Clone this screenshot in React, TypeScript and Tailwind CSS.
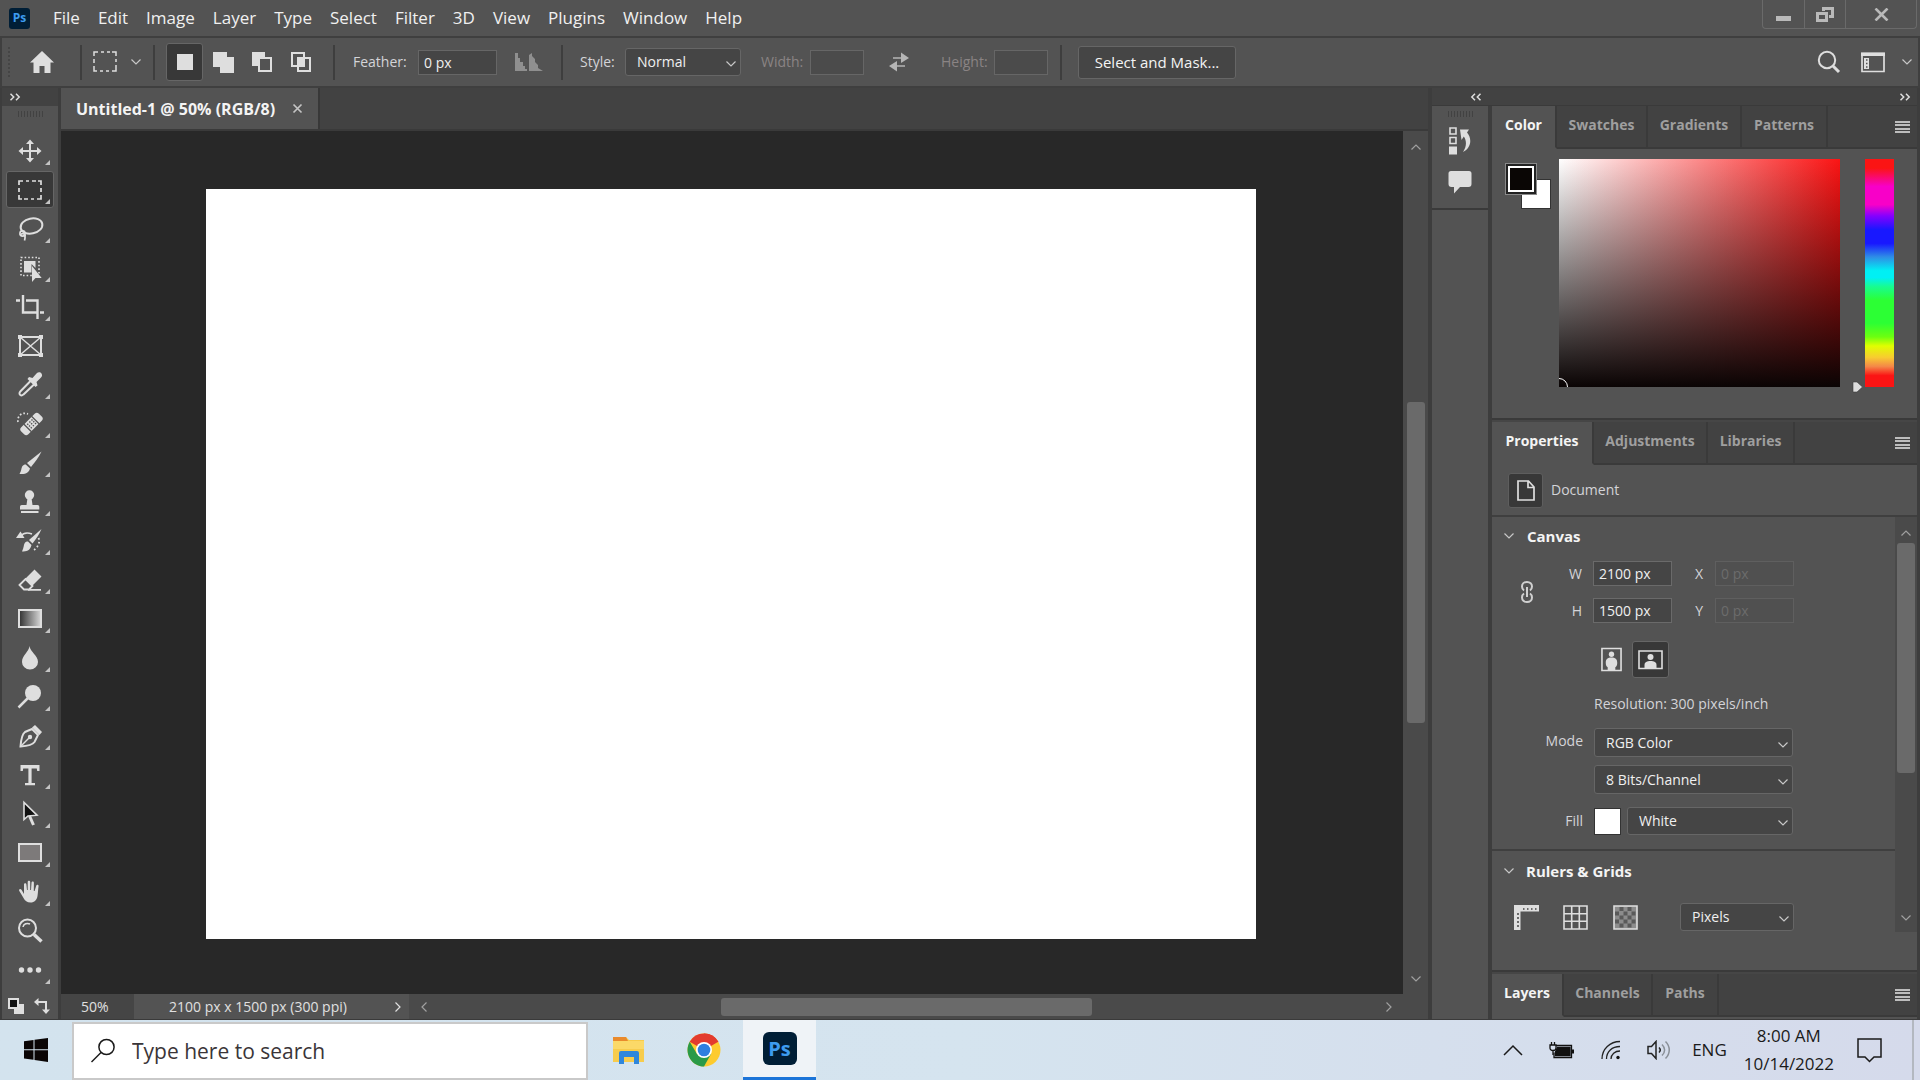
import React, { useState } from "react";

type Kids = { children: React.ReactNode };

/* ---------- shared pieces ---------- */

function Icon({ size = 28, children }: Kids & { size?: number }) {
  return (
    <svg
      width={size}
      height={size}
      viewBox={`0 0 ${size} ${size}`}
      fill="none"
      stroke="#dedede"
      strokeWidth={2}
      className="block shrink-0"
      aria-hidden="true"
    >
      {children}
    </svg>
  );
}

function Chevron({ className = "" }: { className?: string }) {
  return (
    <svg width="12" height="8" viewBox="0 0 12 8" fill="none" stroke="currentColor" strokeWidth="1.2" className={"shrink-0 " + className} aria-hidden="true">
      <path d="M1.500 1.500 6 6l4.500-4.500" />
    </svg>
  );
}

function DoubleChevron({ left = false }: { left?: boolean }) {
  return (
    <svg width="12" height="8" viewBox="0 0 12 8" fill="none" stroke="#dedede" strokeWidth="1.5" className={left ? "rotate-180" : ""} aria-hidden="true">
      <path d="M1.500 .8 4.700 4 1.500 7.200M7 .8 10.200 4 7 7.200" />
    </svg>
  );
}

function Grip() {
  return (
    <div className="flex gap-[2px]" aria-hidden="true">
      {Array.from({ length: 9 }, (_, i) => (
        <span key={i} className="h-[6px] w-px bg-[#424242]" />
      ))}
    </div>
  );
}

function Divider({ className = "" }: { className?: string }) {
  return <span className={"h-[35px] w-[2px] shrink-0 bg-[#3e3e3e] " + className} />;
}

function Dropdown({ label, options, id, className = "" }: { label: string; options: string[]; id: string; className?: string }) {
  return (
    <div className={"relative " + className}>
      <select
        id={id}
        aria-label={label}
        className="block h-full w-full appearance-none rounded-[3px] border border-[#666666] bg-[#454545] pr-6 pl-[11px] text-[14px] leading-5 text-[#f0f0f0] outline-none"
      >
        {options.map((o) => (
          <option key={o}>{o}</option>
        ))}
      </select>
      <Chevron className="pointer-events-none absolute top-1/2 right-[4px] -mt-[2px] text-[#c8c8c8]" />
    </div>
  );
}

/* ---------- tool icons ---------- */

const F = "#dedede";

const tools: { name: string; art: React.ReactNode; menu?: boolean }[] = [
  {
    name: "Move",
    art: (
      <>
        <path d="M14 5v18M5 14h18" />
        <path d="M14 2.500 18 7h-8zM14 25.500 18 21h-8zM2.500 14 7 10v8zM25.500 14 21 10v8z" fill={F} stroke="none" />
      </>
    ),
  },
  {
    name: "Rectangular Marquee",
    art: <path d="M3 9V5h4M10 5h3M16 5h4M22 5h3v4M25 12v4M25 19v4h-4M18 23h-3M12 23H8M6 23H3v-4M3 16v-4" strokeWidth="1.700" />,
  },
  {
    name: "Lasso",
    art: (
      <>
        <ellipse cx="15.500" cy="11" rx="11" ry="7.500" transform="rotate(-12 15.500 11)" />
        <circle cx="6.500" cy="18.500" r="2.600" strokeWidth="1.600" />
        <path d="M4 20c3-3 6 0 5 1.500M8 20c2 1.500 1 3 .5 5.500" strokeWidth="1.700" />
      </>
    ),
  },
  {
    name: "Object Selection",
    art: (
      <>
        <rect x="5" y="3.500" width="18" height="18" strokeWidth="1.600" strokeDasharray="1.600 2" />
        <path d="M8 7h11.500v7L15.500 10v8.500H8z" fill={F} stroke="none" />
        <path d="M16 12v16l3.500-4h6.200z" fill={F} stroke="none" />
      </>
    ),
  },
  {
    name: "Crop",
    art: <path d="M0 7.500h4M7 2v17.500h14M10 7.500h11.500V26M24 19.500h4" strokeWidth="2.400" />,
  },
  {
    name: "Frame",
    menu: false,
    art: (
      <>
        <rect x="4" y="5" width="21" height="18" />
        <path d="m4 5 21 18M25 5 4 23" strokeWidth="1.500" />
        <path d="M2 3h4v4H2zM23 3h4v4h-4zM2 21h4v4H2zM23 21h4v4h-4z" fill={F} stroke="none" />
      </>
    ),
  },
  {
    name: "Eyedropper",
    art: (
      <>
        <path d="M14.500 10 4.500 20.200c-1.500 1.500-1.200 3.500 0 4 1 .6 2 .2 3-.8L18 13.500" />
        <path d="m13 6 3.500 1 4-4.500c1.500-1.700 4-1.700 5 0s.7 3-.7 4.300L20.500 11l1 3.500-2 1.500L11.500 8z" fill={F} stroke="none" />
      </>
    ),
  },
  {
    name: "Spot Healing Brush",
    art: (
      <>
        <g transform="rotate(-45 15.500 14)">
          <rect x="3" y="9" width="25" height="10" rx="3" fill={F} stroke="none" />
          <path d="M10 8.500v11M21 8.500v11" stroke="#535353" strokeWidth="1.200" />
          <path d="M12 11.500h8M12 14h8M12 16.500h8" stroke="#535353" strokeWidth="1.400" strokeDasharray="1.400 1.600" />
        </g>
        <path d="M2 12C1 6 6 1.500 12 4" strokeWidth="1.700" strokeDasharray="1.700 2" />
      </>
    ),
  },
  {
    name: "Brush",
    art: (
      <>
        <path d="M25.500 2.500 11 14l4 4C19 13 23 8 25.500 2.500z" fill={F} stroke="none" />
        <path d="M9.800 15.500c-3.300 0-4 2.500-4.500 5-.3 1.500-1 3-1.800 4.500 4.500 0 9 .2 10.500-5.500z" fill={F} stroke="none" />
      </>
    ),
  },
  {
    name: "Clone Stamp",
    art: (
      <>
        <circle cx="13.500" cy="7" r="4.700" fill={F} stroke="none" />
        <path d="M11.500 10h4l1 7h5c1.200 0 1.800.8 1.800 2v2.500H4V19c0-1.200.6-2 1.800-2h4.700zM5 23h17.500v2H5z" fill={F} stroke="none" />
      </>
    ),
  },
  {
    name: "History Brush",
    art: (
      <>
        <path d="M25.500 2 13 13l3.500 3.500C20 12 23.500 7 25.500 2z" fill={F} stroke="none" />
        <path d="M12 14.500c-3 0-3.700 2-4.200 4.500-.3 1.700-1 3.500-1.800 5.500 4.500 0 8-.5 9.500-6.500z" fill={F} stroke="none" />
        <path d="M0 11 4.500 4.500 8.500 11z" fill={F} stroke="none" />
        <path d="M5 9C8 5 12 5.500 16 7" strokeWidth="1.500" />
        <path d="M22.500 11c2 4-.5 9-4.500 12" strokeWidth="1.800" strokeDasharray="1.700 2.300" />
      </>
    ),
  },
  {
    name: "Eraser",
    art: (
      <>
        <path d="m3.500 19 6-6 7 7-3.500 3.500H8z" strokeWidth="1.800" />
        <path d="M9 13 18.500 3.500l7 7-9.500 9.500zM12 23h13v1.800H12z" fill={F} stroke="none" />
      </>
    ),
  },
  {
    name: "Gradient",
    art: (
      <>
        <defs>
          <linearGradient id="toolGradient">
            <stop offset="0" stopColor="#303030" />
            <stop offset="1" stopColor="#d8d8d8" />
          </linearGradient>
        </defs>
        <rect x="3" y="5" width="22" height="17" fill="url(#toolGradient)" />
      </>
    ),
  },
  {
    name: "Blur",
    art: <path d="M13.500 2C14 8 22 11 22 18a8 7.500 0 0 1-16 0C6 11 13 8 13.500 2z" fill={F} stroke="none" />,
  },
  {
    name: "Dodge",
    art: (
      <>
        <circle cx="17" cy="10" r="8" fill={F} stroke="none" />
        <path d="M12 15 2.500 24.500" strokeWidth="2.500" />
      </>
    ),
  },
  {
    name: "Pen",
    art: (
      <>
        <path d="M4.500 24.500C5 18 6 12 9 10l7-3 6 6-3.500 7c-2 3-7 4-14 4.500z" />
        <path d="m4.500 24.500 9-9" strokeWidth="1.500" />
        <circle cx="14" cy="15" r="2.200" fill={F} stroke="none" />
        <path d="m16 5.500 3-2.500 7 7-2.500 3z" fill={F} stroke="none" />
      </>
    ),
  },
  {
    name: "Horizontal Type",
    art: <path d="M4.500 4h19v6h-2.300l-.4-2.500h-5.200V22H19v2.300H9V22h3.400V7.500H7.200L6.800 10H4.500z" fill={F} stroke="none" />,
  },
  {
    name: "Path Selection",
    art: (
      <>
        <path d="M8 2.500v17l4-3.500 9-.8z" fill="#111111" strokeWidth="1.600" />
        <path d="m13.500 16 4 9" strokeWidth="3" />
      </>
    ),
  },
  {
    name: "Rectangle",
    art: <rect x="3" y="5" width="22" height="17" fill="#7d7a7a" />,
  },
  {
    name: "Hand",
    art: (
      <path
        d="M8 16V6.500c0-1.600 2.300-1.600 2.400 0L11 12h.7V4c0-1.700 2.500-1.700 2.500 0v8h.8l.5-7.300c.1-1.600 2.400-1.500 2.400 0L17.800 13h.8l1.700-5.500c.5-1.500 2.600-.9 2.300.6C22 12 22 15 21.500 18c-.7 4-3 6.500-7 6.500-3.500 0-5.500-1.700-7-4.500-1.500-2.700-3-5-4.200-7-.9-1.600 1-2.600 2.200-1.300z"
        fill={F}
        stroke="none"
      />
    ),
  },
  {
    name: "Zoom",
    menu: false,
    art: (
      <>
        <circle cx="11.500" cy="11" r="8.500" />
        <path d="M7 10c.5-3 4-4.500 7-3" strokeWidth="1.500" />
        <path d="m18 17.500 7.500 7" strokeWidth="3.500" />
      </>
    ),
  },
  {
    name: "Edit Toolbar",
    art: (
      <>
        <circle cx="5.500" cy="14" r="2.700" fill={F} stroke="none" />
        <circle cx="14" cy="14" r="2.700" fill={F} stroke="none" />
        <circle cx="22.500" cy="14" r="2.700" fill={F} stroke="none" />
      </>
    ),
  },
];

function Toolbar() {
  const [active, setActive] = useState("Rectangular Marquee");
  return (
    <aside className="flex w-[61px] shrink-0 flex-col border-x-2 border-r-[3px] border-[#3d3d3d] bg-[#535353]" aria-label="Tools">
      <div className="flex h-[18px] items-center bg-[#424242] pl-[7px]">
        <DoubleChevron />
      </div>
      <div className="flex h-[26px] justify-center pt-[5px]">
        <Grip />
      </div>
      {tools.map((t) => (
        <button
          key={t.name}
          type="button"
          aria-label={t.name}
          onClick={() => setActive(t.name)}
          className={
            "relative mx-[4px] my-px flex h-[37px] shrink-0 items-center justify-center rounded-[3px] border " +
            (active === t.name ? "border-[#666666] bg-[#383838]" : "border-transparent")
          }
        >
          <Icon>{t.art}</Icon>
          {t.menu !== false && (
            <svg width="5" height="5" viewBox="0 0 5 5" className="absolute right-[3px] bottom-[3px]" aria-hidden="true">
              <path d="M5 0v5H0z" fill="#c4c4c4" />
            </svg>
          )}
        </button>
      ))}
      <div className="flex h-[30px] items-center gap-2 pt-1 pl-[5px]">
        <button type="button" aria-label="Default colors">
          <Icon size={18}>
            <path d="M7 7h10v10H7z" fill={F} stroke="none" />
            <path d="M2 2h9v9H2z" fill="#111111" />
          </Icon>
        </button>
        <button type="button" aria-label="Switch colors">
          <Icon size={18}>
            <path d="M4 5h9v8" />
            <path d="M1 5 5.500 1v8zM13 17l-4-4.500h8z" fill={F} stroke="none" />
          </Icon>
        </button>
      </div>
    </aside>
  );
}

/* ---------- top bars ---------- */

function PsLogo({ className, text }: { className: string; text: string }) {
  return (
    <span className={"flex shrink-0 items-center justify-center bg-[#001e36] font-bold text-[#3d9cf0] " + className}>
      <span className={text}>Ps</span>
    </span>
  );
}

const menus = ["File", "Edit", "Image", "Layer", "Type", "Select", "Filter", "3D", "View", "Plugins", "Window", "Help"];

function MenuBar() {
  return (
    <header className="flex h-[38px] shrink-0 items-start justify-between border-b-2 border-[#3f3f3f]">
      <div className="flex h-[36px] items-center pl-[9px]">
        <PsLogo className="h-[21px] w-[21px] rounded-[3px]" text="text-[12px] leading-4" />
        <nav className="ml-[23px] flex gap-[18px]">
          {menus.map((m) => (
            <button key={m} type="button" className="text-[17px] leading-6 text-[#f0f0f0]">
              {m}
            </button>
          ))}
        </nav>
      </div>
      <div className="mr-[3px] flex h-[29px] divide-x divide-[#6a6a6a] rounded-b-[4px] border border-t-0 border-[#6a6a6a]">
        <button type="button" aria-label="Minimize" className="flex w-[42px] justify-center pt-[16px]">
          <span className="h-[5px] w-[15px] bg-[#b9b9b9]" />
        </button>
        <button type="button" aria-label="Restore" className="flex w-[41px] justify-center pt-[6px]">
          <svg width="18" height="17" viewBox="0 0 18 17" fill="none" stroke="#b9b9b9" strokeWidth="3" aria-hidden="true">
            <path d="M7.500 5V2.500h9v8H13" />
            <path d="M1.500 7.500h9v7h-9z" />
          </svg>
        </button>
        <button type="button" aria-label="Close" className="flex w-[70px] justify-center pt-[8px]">
          <svg width="15" height="13" viewBox="0 0 15 13" stroke="#b9b9b9" strokeWidth="2.600" aria-hidden="true">
            <path d="m1.500 .5 12 12M13.500 .5l-12 12" />
          </svg>
        </button>
      </div>
    </header>
  );
}

function OptionsBar() {
  const field = "h-[25px] border border-[#666666] bg-[#454545] px-[5px] text-[14px] text-[#f0f0f0] outline-none";
  return (
    <section className="flex h-[50px] shrink-0 items-center border-x-2 border-b-2 border-[#3f3f3f] text-[14px] leading-5 text-[#d4d4d8]">
      <span className="ml-[6px] h-[30px] w-[2px] border-l-2 border-dotted border-[#454545]" />
      <button type="button" aria-label="Home" className="ml-[18px]">
        <Icon size={28}>
          <path d="M14 3 26 14.500h-3.500V25h-6v-7h-5v7h-6V14.500H2z" fill={F} stroke="none" />
        </Icon>
      </button>
      <Divider className="ml-[24px]" />
      <button type="button" aria-label="Marquee presets" className="ml-[9px] flex items-center">
        <Icon size={28}>
          <path d="M3 8V4h4M10 4h3M16 4h3M21 4h4v4M25 11v3M25 17v6h-4M18 23h-3M12 23H9M6 23H3v-5M3 15v-4" strokeWidth="1.500" />
        </Icon>
        <Chevron className="ml-[11px] text-[#c8c8c8]" />
      </button>
      <Divider className="ml-[11px]" />
      <div className="ml-[11px] flex items-center">
        <button type="button" aria-label="New selection" className="flex h-[38px] w-[37px] items-center justify-center rounded-[3px] border border-[#666666] bg-[#383838]">
          <span className="h-[16px] w-[16px] bg-[#dedede]" />
        </button>
        <button type="button" aria-label="Add to selection" className="ml-[8px]">
          <Icon size={25}>
            <path d="M2 2h14v5h7v16H9v-6H2z" fill={F} stroke="none" />
          </Icon>
        </button>
        <button type="button" aria-label="Subtract from selection" className="ml-[14px]">
          <Icon size={25}>
            <path d="M2 2h13v5H8v9H2z" fill={F} stroke="none" />
            <path d="M9 8h12v13H9z" />
          </Icon>
        </button>
        <button type="button" aria-label="Intersect with selection" className="ml-[14px]">
          <Icon size={25}>
            <path d="M3 3h12v13H3zM9 8h12v13H9z" />
            <path d="M9 8h6v8H9z" fill={F} />
          </Icon>
        </button>
      </div>
      <Divider className="ml-[19px]" />
      <label htmlFor="feather" className="ml-[18px] w-[65px]">Feather:</label>
      <input id="feather" defaultValue="0 px" className={field + " w-[79px]"} />
      <svg width="28" height="18" viewBox="0 0 28 18" className="ml-[18px]" fill="#8f8f8f" aria-hidden="true">
        <path d="M0 0h3v5h2v4h3v4h2v3h2v2H0zM14 2l3-2v3l3 3v3l3 3v3l5 3H14z" />
      </svg>
      <Divider className="ml-[18px]" />
      <label htmlFor="style" className="ml-[17px] w-[45px]">Style:</label>
      <Dropdown id="style" label="Style" options={["Normal", "Fixed Ratio", "Fixed Size"]} className="h-[28px] w-[116px]" />
      <label htmlFor="selw" className="ml-[20px] w-[49px] text-[#8a8484]">Width:</label>
      <input id="selw" disabled className="h-[25px] w-[54px] border border-[#666666] bg-[#4b4b4b]" />
      <button type="button" aria-label="Swap width and height" className="ml-[23px]">
        <svg width="24" height="22" viewBox="0 0 24 22" fill="none" stroke="#b5b5b5" strokeWidth="1.600" aria-hidden="true">
          <path d="M6 7h10M8 15h10" />
          <path d="M14 1.500 22 7l-8 5zM10 10l-8 5 8 5.500z" fill="#b5b5b5" stroke="none" />
        </svg>
      </button>
      <label htmlFor="selh" className="ml-[30px] w-[53px] text-[#8a8484]">Height:</label>
      <input id="selh" disabled className="h-[25px] w-[54px] border border-[#666666] bg-[#4b4b4b]" />
      <Divider className="ml-[12px]" />
      <button type="button" className="ml-[16px] h-[33px] w-[158px] rounded-[3px] border border-[#666666] bg-[#454545] text-[15px] text-[#f4f4f4]">
        Select and Mask...
      </button>
      <div className="ml-auto flex items-center pr-[5px]">
        <button type="button" aria-label="Search">
          <Icon size={24}>
            <circle cx="10" cy="10" r="8.200" />
            <path d="m16 16 6 6" strokeWidth="3" />
          </Icon>
        </button>
        <button type="button" aria-label="Workspace" className="ml-[19px] flex items-center">
          <Icon size={26}>
            <path d="M2 4.500h22v18H2z" strokeWidth="1.700" />
            <path d="M1 3.500h24V7H1zM4 9h5v11H4z" fill={F} stroke="none" />
            <path d="M6 11h1.500M6 14.500h1.500M6 18h1.500" stroke="#535353" strokeWidth="1.500" />
          </Icon>
          <Chevron className="ml-[15px] text-[#c8c8c8]" />
        </button>
      </div>
    </section>
  );
}

/* ---------- document ---------- */

function Workspace() {
  return (
    <main className="flex min-w-0 flex-1 flex-col">
      <div className="flex h-[43px] shrink-0 border-b-2 border-[#3a3a3a] bg-[#424242]">
        <div className="flex items-center border-r-2 border-[#383838] bg-[#535353] pr-[15px] pl-[15px]">
          <span className="w-[216px] text-[16px] leading-5 font-bold text-[#f4f4f4]">Untitled-1 @ 50% (RGB/8)</span>
          <button type="button" aria-label="Close document">
            <svg width="11" height="11" viewBox="0 0 11 11" stroke="#c4c4c4" strokeWidth="1.700" aria-hidden="true">
              <path d="m1.500 1.500 8 8M9.500 1.500l-8 8" />
            </svg>
          </button>
        </div>
      </div>
      <div className="flex min-h-0 flex-1">
        <div className="flex min-w-0 flex-1 flex-col">
          <div className="min-h-0 flex-1 bg-[#282828] pt-[58px] pr-[147px] pb-[55px] pl-[145px]">
            <div className="h-full w-full bg-white" />
          </div>
          <footer className="flex h-[25px] shrink-0 bg-[#4a4a4a] text-[14px] leading-[25px] text-[#e0e0e0]">
            <span className="w-[73px] bg-[#454545] pl-[20px]">50%</span>
            <button type="button" className="flex w-[275px] items-center bg-[#535353] pl-[35px]">
              <span className="w-[223px] text-left">2100 px x 1500 px (300 ppi)</span>
              <Chevron className="-rotate-90" />
            </button>
            <div className="flex flex-1 items-center pr-[8px] pl-[9px]">
              <Chevron className="rotate-90 text-[#a0a0a0]" />
              <div className="flex flex-1 justify-center">
                <span className="h-[18px] w-[39%] rounded-[3px] bg-[#6a6a6a]" />
              </div>
              <Chevron className="-rotate-90 text-[#a0a0a0]" />
            </div>
          </footer>
        </div>
        <div className="flex w-[25px] shrink-0 flex-col items-center bg-[#4a4a4a] pt-[12px] pb-[36px]">
          <Chevron className="rotate-180 text-[#a0a0a0]" />
          <div className="flex min-h-0 w-full flex-1 flex-col items-center pt-[251px]">
            <span className="h-[56%] w-[18px] rounded-[3px] bg-[#6a6a6a]" />
          </div>
          <Chevron className="text-[#a0a0a0]" />
        </div>
      </div>
    </main>
  );
}

/* ---------- side panels ---------- */

function TabRow({ tabs }: { tabs: { name: string; width: string }[] }) {
  return (
    <div className="flex h-[43px] shrink-0 bg-[#424242]" role="tablist">
      {tabs.map((t, i) => (
        <button
          key={t.name}
          type="button"
          role="tab"
          aria-selected={i === 0}
          className={
            "border-r-2 border-b-2 border-r-[#3a3a3a] pb-[3px] text-[14px] leading-5 font-bold " +
            t.width +
            (i === 0 ? " border-b-[#535353] bg-[#535353] text-[#f4f4f4]" : " border-b-[#3a3a3a] text-[#9f9f9f]")
          }
        >
          {t.name}
        </button>
      ))}
      <div className="flex flex-1 justify-end border-b-2 border-[#3a3a3a] pt-[15px] pr-[7px]">
        <button type="button" aria-label="Panel menu" className="flex h-[12px] w-[15px] flex-col justify-between">
          {[0, 1, 2, 3].map((n) => (
            <span key={n} className="h-[2px] w-full bg-[#bdbdbd]" />
          ))}
        </button>
      </div>
    </div>
  );
}

function ColorPanel() {
  return (
    <section className="flex h-[314px] shrink-0 flex-col border-b-2 border-[#3a3a3a]">
      <TabRow
        tabs={[
          { name: "Color", width: "w-[65px]" },
          { name: "Swatches", width: "w-[91px]" },
          { name: "Gradients", width: "w-[94px]" },
          { name: "Patterns", width: "w-[86px]" },
        ]}
      />
      <div className="flex flex-1 items-start pt-[10px] pr-[23px] pl-[13px]">
        <div className="relative mt-[4px] h-[46px] w-[46px] shrink-0">
          <button type="button" aria-label="Background color" className="absolute right-0 bottom-0 h-[30px] w-[30px] border border-[#333333] bg-white" />
          <button type="button" aria-label="Foreground color" className="absolute top-0 left-0 h-[32px] w-[32px] border border-[#8a8a8a] bg-[#222222] p-[2px]">
            <span className="block h-full w-full border-2 border-white bg-[#0a0605]" />
          </button>
        </div>
        <div className="relative ml-[8px] h-[228px] flex-1 overflow-hidden bg-[linear-gradient(to_top,#0a0404,transparent),linear-gradient(to_right,#ffffff,#fb1414)]">
          <span className="absolute -bottom-[9px] -left-[9px] h-[18px] w-[18px] rounded-full border border-white" />
        </div>
        <div className="relative ml-[25px] h-[228px] w-[29px] shrink-0 bg-[linear-gradient(to_bottom,#fb1414_0%,#fb1414_4%,#f800c8_12%,#f800c8_20%,#8400ff_25%,#1818ff_31%,#1818ff_37%,#2e8ee6_43%,#00f0f4_49%,#00f0f4_52%,#18fc90_56%,#2cff34_62%,#2cff34_72%,#6cff10_78%,#e0ff00_82%,#f8cc30_87%,#f48848_91%,#fb1414_95%,#fb1414_100%)]">
          <svg width="11" height="12" viewBox="0 0 11 12" className="absolute -bottom-[6px] -left-[13px]" aria-hidden="true">
            <path d="M1 1h4l5.500 5L5 11H1z" fill="#dedede" stroke="#3c3c3c" strokeWidth=".6" />
          </svg>
        </div>
      </div>
    </section>
  );
}

function SizeField({ id, label, value, off = false }: { id: string; label: string; value: string; off?: boolean }) {
  return (
    <div className="flex items-center">
      <label htmlFor={id} className={"text-right text-[14px] leading-5 " + (off ? "w-[31px]" : "w-[90px]")}>
        {label}
      </label>
      <input
        id={id}
        disabled={off}
        defaultValue={value}
        className={
          "h-[25px] w-[79px] border px-[5px] text-[14px] outline-none " +
          (off ? "ml-[12px] border-[#5f5f5f] bg-[#505050] text-[#6c6c6c]" : "ml-[11px] border-[#6a6a6a] bg-[#454545] text-[#f0f0f0]")
        }
      />
    </div>
  );
}

function PropertiesPanel() {
  const heading = "flex items-center text-[15px] leading-5 font-bold text-[#f4f4f4]";
  const rowLabel = "w-[91px] shrink-0 text-right text-[14px] leading-5";
  return (
    <section className="flex min-h-0 flex-1 flex-col border-b-2 border-[#3a3a3a] text-[#d4d4d8]">
      <TabRow
        tabs={[
          { name: "Properties", width: "w-[102px]" },
          { name: "Adjustments", width: "w-[114px]" },
          { name: "Libraries", width: "w-[87px]" },
        ]}
      />
      <div className="flex h-[52px] shrink-0 items-center border-b-2 border-[#3f3f3f] pl-[16px]">
        <span className="flex h-[35px] w-[35px] items-center justify-center rounded-[3px] border border-[#5e5e5e] bg-[#383838]">
          <svg width="18" height="21" viewBox="0 0 18 21" fill="none" stroke="#dedede" strokeWidth="1.700" aria-hidden="true">
            <path d="M1 1h10.500L17 7v13H1zM11 1v6.500h6" />
          </svg>
        </span>
        <span className="ml-[8px] text-[14px] leading-5">Document</span>
      </div>
      <div className="flex min-h-0 flex-1">
        <div className="min-w-0 flex-1">
          <div className="h-[334px] border-b-2 border-[#3f3f3f] pt-[9px]">
            <h2 className={heading}>
              <Chevron className="mr-[12px] ml-[11px] text-[#c8c8c8]" />
              Canvas
            </h2>
            <div className="relative mt-[15px] flex flex-col gap-[12px]">
              <div className="flex">
                <SizeField id="cw" label="W" value="2100 px" />
                <SizeField id="cx" label="X" value="0 px" off />
              </div>
              <div className="flex">
                <SizeField id="ch" label="H" value="1500 px" />
                <SizeField id="cy" label="Y" value="0 px" off />
              </div>
              <button type="button" aria-label="Link width and height" className="absolute top-[20px] left-[29px]">
                <svg width="12" height="22" viewBox="0 0 12 22" fill="none" stroke="#d0d0d0" strokeWidth="2" aria-hidden="true">
                  <path d="M3 9.500C1.500 8.500 1 7.500 1 5.500 1 3 3 1 6 1s5 2 5 4.500c0 2-.5 3-2 4M3 12.500c-1.500 1-2 2-2 4C1 19 3 21 6 21s5-2 5-4.500c0-2-.5-3-2-4M6 6v10" />
                </svg>
              </button>
            </div>
            <div className="mt-[18px] flex items-center pl-[109px]">
              <button type="button" aria-label="Portrait">
                <svg width="21" height="25" viewBox="0 0 22 25" aria-hidden="true">
                  <path d="M1 1h20v23H1z" fill="none" stroke="#dedede" strokeWidth="1.700" />
                  <circle cx="11" cy="7" r="2.800" fill="#dedede" />
                  <path d="M5 16c0-4 2-5.500 6-5.500s6 1.500 6 5.500c0 2.500-.5 4-2 4.500V24H7v-3.500c-1.500-.5-2-2-2-4.500z" fill="#dedede" />
                </svg>
              </button>
              <button type="button" aria-label="Landscape" className="ml-[10px] flex h-[37px] w-[37px] items-center justify-center rounded-[3px] border border-[#666666] bg-[#383838]">
                <svg width="25" height="20" viewBox="0 0 25 20" aria-hidden="true">
                  <path d="M1 1h23v17.500H1z" fill="none" stroke="#dedede" strokeWidth="1.600" />
                  <circle cx="12.500" cy="7" r="3" fill="#dedede" />
                  <path d="M6.500 18v-3c0-3 2.500-4 6-4s6 1 6 4v3z" fill="#dedede" />
                </svg>
              </button>
            </div>
            <p className="mt-[16px] pl-[102px] text-[14px] leading-5">Resolution: 300 pixels/inch</p>
            <div className="mt-[14px] flex">
              <label htmlFor="mode" className={rowLabel + " pt-[3px]"}>Mode</label>
              <Dropdown id="mode" label="Mode" options={["RGB Color", "CMYK Color", "Grayscale"]} className="ml-[11px] h-[29px] w-[199px]" />
            </div>
            <div className="mt-[8px] pl-[102px]">
              <Dropdown id="depth" label="Bit depth" options={["8 Bits/Channel", "16 Bits/Channel"]} className="h-[29px] w-[199px]" />
            </div>
            <div className="mt-[13px] flex items-center">
              <label htmlFor="fill" className={rowLabel}>Fill</label>
              <span className="ml-[11px] h-[27px] w-[27px] border border-[#333333] bg-white" />
              <Dropdown id="fill" label="Fill" options={["White", "Black", "Transparent"]} className="ml-[6px] h-[28px] w-[166px]" />
            </div>
          </div>
          <h2 className={heading + " mt-[10px]"}>
            <Chevron className="mr-[11px] ml-[11px] text-[#c8c8c8]" />
            Rulers &amp; Grids
          </h2>
          <div className="mt-[22px] flex items-center pl-[22px]">
            <button type="button" aria-label="Rulers">
              <svg width="25" height="25" viewBox="0 0 25 25" aria-hidden="true">
                <path d="M0 0h25v6.500H6.500V25H0z" fill="#dedede" />
                <path d="M9 4h1.500M13 4h1.500M17 4h1.500M21 4h1.500M3 9h2M3 13h2M3 17h2M3 21h2" stroke="#444444" strokeWidth="1.600" />
              </svg>
            </button>
            <button type="button" aria-label="Grid" className="ml-[24px]">
              <svg width="25" height="25" viewBox="0 0 25 25" fill="none" stroke="#dedede" strokeWidth="1.600" aria-hidden="true">
                <path d="M1 1h23v23H1zM8.700 1v23M16.300 1v23M1 8.700h23M1 16.300h23" />
              </svg>
            </button>
            <button type="button" aria-label="Transparency grid" className="ml-[25px]">
              <svg width="25" height="25" viewBox="0 0 25 25" aria-hidden="true">
                <path d="M1 1h23v23H1z" fill="#8c8c8c" stroke="#dedede" strokeWidth="1.600" />
                <path d="M6.500 2h4v4h-4zM14.500 2h4v4h-4zM2 6.500h4v4H2zM10.500 6.500h4v4h-4zM18.500 6.500h4v4h-4zM6.500 10.500h4v4h-4zM14.500 10.500h4v4h-4zM2 14.500h4v4H2zM10.500 14.500h4v4h-4zM18.500 14.500h4v4h-4zM6.500 18.500h4v4h-4zM14.500 18.500h4v4h-4z" fill="#5a5a5a" />
              </svg>
            </button>
            <Dropdown id="units" label="Units" options={["Pixels", "Inches", "Centimeters"]} className="ml-[42px] h-[28px] w-[114px]" />
          </div>
        </div>
        <div className="mb-[38px] flex w-[22px] shrink-0 flex-col items-center bg-[#4a4a4a] pt-[12px] pb-[10px]">
          <Chevron className="rotate-180 text-[#a0a0a0]" />
          <div className="flex w-full flex-1 flex-col items-center pt-[6px]">
            <span className="h-[62%] w-[18px] rounded-[3px] bg-[#6a6a6a]" />
          </div>
          <Chevron className="text-[#a0a0a0]" />
        </div>
      </div>
    </section>
  );
}

function SidePanels() {
  return (
    <div className="flex w-[492px] shrink-0 flex-col border-r-[3px] border-l-[4px] border-[#3d3d3d]">
      <div className="flex h-[18px] shrink-0 items-center justify-between border-b border-[#3a3a3a] bg-[#424242] pr-[6px] pl-[38px]">
        <DoubleChevron left />
        <DoubleChevron />
      </div>
      <div className="flex min-h-0 flex-1">
        <div className="flex w-[60px] shrink-0 flex-col border-r-[4px] border-[#3d3d3d]">
          <div className="flex h-[104px] flex-col items-center border-b-2 border-[#3a3a3a] pt-[5px]">
            <Grip />
            <button type="button" aria-label="History" className="mt-[9px]">
              <svg width="24" height="29" viewBox="0 0 24 29" fill="none" stroke="#dedede" strokeWidth="1.600" aria-hidden="true">
                <path d="M2 2h6v6H2zM2 11.500h6v6H2z" />
                <path d="M1 20.500h8v8H1zM12 3.500h9L19 6.500C24.500 13 23 22 15 26c3.500-5 4-11 .8-15.500L13.500 14z" fill="#dedede" stroke="none" />
              </svg>
            </button>
            <button type="button" aria-label="Comments" className="mt-[16px]">
              <svg width="24" height="23" viewBox="0 0 24 23" fill="#dedede" aria-hidden="true">
                <path d="M3 0h18a2.500 2.500 0 0 1 2.500 2.500V13a3 3 0 0 1-3 3H12l-6 6.500V16H3.500a3 3 0 0 1-3-3V2.500A2.500 2.500 0 0 1 3 0z" />
              </svg>
            </button>
          </div>
        </div>
        <div className="flex min-w-0 flex-1 flex-col gap-[2px] bg-[#464646]">
          <div className="flex flex-col bg-[#535353]">
            <ColorPanel />
          </div>
          <div className="flex min-h-0 flex-1 flex-col bg-[#535353]">
            <PropertiesPanel />
          </div>
          <section className="h-[45px] shrink-0 bg-[#535353]">
            <TabRow
              tabs={[
                { name: "Layers", width: "w-[72px]" },
                { name: "Channels", width: "w-[89px]" },
                { name: "Paths", width: "w-[66px]" },
              ]}
            />
          </section>
        </div>
      </div>
    </div>
  );
}

/* ---------- taskbar ---------- */

function Taskbar() {
  return (
    <footer className="flex h-[60px] shrink-0 items-center bg-gradient-to-r from-[#d3e3ee] via-[#d5e4ef] to-[#d5daeb] text-[17px] text-[#1a1a1a]">
      <button type="button" aria-label="Start" className="ml-[24px]">
        <svg width="24" height="24" viewBox="0 0 24 24" fill="#0a0505" aria-hidden="true">
          <path d="M0 3.300 9.500 2v9.300H0zM10.500 1.800 24 0v11.300H10.500zM0 12.300h9.500v9.400L0 20.500zM10.500 12.300H24V24l-13.500-2z" />
        </svg>
      </button>
      <label className="ml-[24px] flex h-[58px] w-[516px] items-center self-end border-2 border-[#c9c9c9] bg-white pl-[16px]">
        <svg width="26" height="26" viewBox="0 0 26 26" fill="none" stroke="#1a1a1a" strokeWidth="1.500" aria-hidden="true">
          <circle cx="16.500" cy="9" r="7.600" />
          <path d="M11 14.500 1.500 24" />
        </svg>
        <input aria-label="Search" placeholder="Type here to search" className="ml-[16px] min-w-0 flex-1 text-[21px] leading-7 outline-none placeholder:text-[#3a3538]" />
      </label>
      <button type="button" aria-label="File Explorer" className="ml-[24px]">
        <svg width="33" height="28" viewBox="0 0 33 28" aria-hidden="true">
          <path d="M1 1h13l3 3h15v22H1z" fill="#f7cc4c" />
          <path d="M1 1h13l2 4H1z" fill="#e98a2c" />
          <path d="M1 5h31v8H1z" fill="#fbd968" />
          <path d="M7 28V17a2 2 0 0 1 2-2h16a2 2 0 0 1 2 2v11h-5v-7H12v7z" fill="#2f87dc" />
        </svg>
      </button>
      <button type="button" aria-label="Chrome" className="ml-[42px]">
        <svg width="34" height="34" viewBox="0 0 34 34" aria-hidden="true">
          <circle cx="17" cy="17" r="16.500" fill="#fdcb2e" />
          <path d="M17 17 2.700 8.800A16.500 16.500 0 0 1 31.300 8.800z" fill="#e33b2e" />
          <path d="M17 9h14.400A16.500 16.500 0 0 0 17 .5z" fill="#e33b2e" />
          <path d="M10 21 2.700 8.800A16.500 16.500 0 0 0 17 33.500l7-12.500-7 2z" fill="#2a9a48" />
          <circle cx="17" cy="17" r="8" fill="#ffffff" />
          <circle cx="17" cy="17" r="6.300" fill="#2f7fe0" />
        </svg>
      </button>
      <button type="button" aria-label="Photoshop" className="ml-[22px] flex h-full w-[73px] items-center justify-center border-b-[3px] border-[#1c74d8] bg-[#eff3f7]">
        <PsLogo className="h-[33px] w-[34px] rounded-[6px]" text="text-[20px] leading-6" />
      </button>
      <div className="ml-auto flex h-full items-center">
        <svg width="20" height="12" viewBox="0 0 20 12" fill="none" stroke="#1a1a1a" strokeWidth="1.500" aria-label="Show hidden icons">
          <path d="m1 11 9-9 9 9" />
        </svg>
        <svg width="26" height="18" viewBox="0 0 26 18" className="ml-[26px]" fill="none" stroke="#111111" strokeWidth="1.300" aria-label="Battery">
          <path d="M7 4.500h15.500v12H5v-5" />
          <path d="M8.500 6.500H21v8H6.500V11z" fill="#111111" />
          <path d="M23 8.500h2v4h-2z" fill="#111111" stroke="none" />
          <path d="M2.500 1v3M5.500 1v3M1 4h6v3c0 1.500-1 2.500-3 2.500S1 8.500 1 7zM4 9.500V14" />
        </svg>
        <svg width="20" height="20" viewBox="0 0 20 20" className="ml-[26px]" fill="none" stroke="#222222" strokeWidth="1.300" aria-label="Wi-Fi">
          <path d="M1 19C1 9 9 1.500 19 1.500M5.500 19C5.500 11.500 11 6.500 19 6.500M10 19c0-4.500 4-8 9-8" />
          <circle cx="17" cy="17.500" r="1.700" fill="#111111" stroke="none" />
        </svg>
        <svg width="23" height="20" viewBox="0 0 23 20" className="ml-[26px]" fill="none" stroke="#222222" strokeWidth="1.500" aria-label="Volume">
          <path d="M1 6.500h3.500L9 1.500v17l-4.500-5H1z" />
          <path d="M12 7.500c1.500 1.500 1.500 3.500 0 5" />
          <path d="M15 4.500c3.500 3.500 3.500 7.500 0 11M18.500 1.500c5 5 5 12 0 17" stroke="#8a9098" />
        </svg>
        <span className="ml-[22px]">ENG</span>
        <time className="ml-[17px] text-center leading-7">
          8:00 AM
          <br />
          10/14/2022
        </time>
        <svg width="25" height="25" viewBox="0 0 25 25" className="ml-[23px]" fill="none" stroke="#1a1a1a" strokeWidth="1.500" aria-label="Notifications">
          <path d="M1 1h23v18h-7l-4.500 4.500L8 19H1z" />
        </svg>
        <span className="ml-[30px] h-full w-[2px] bg-[#b3b8c0]" />
        <span className="h-full w-[6px]" />
      </div>
    </footer>
  );
}

export default function App() {
  return (
    <div className="flex h-screen min-h-[720px] flex-col bg-[#535353] font-['Open_Sans',sans-serif]">
      <MenuBar />
      <OptionsBar />
      <div className="flex min-h-0 flex-1 border-b border-[#3a3a3a]">
        <Toolbar />
        <Workspace />
        <SidePanels />
      </div>
      <Taskbar />
    </div>
  );
}
